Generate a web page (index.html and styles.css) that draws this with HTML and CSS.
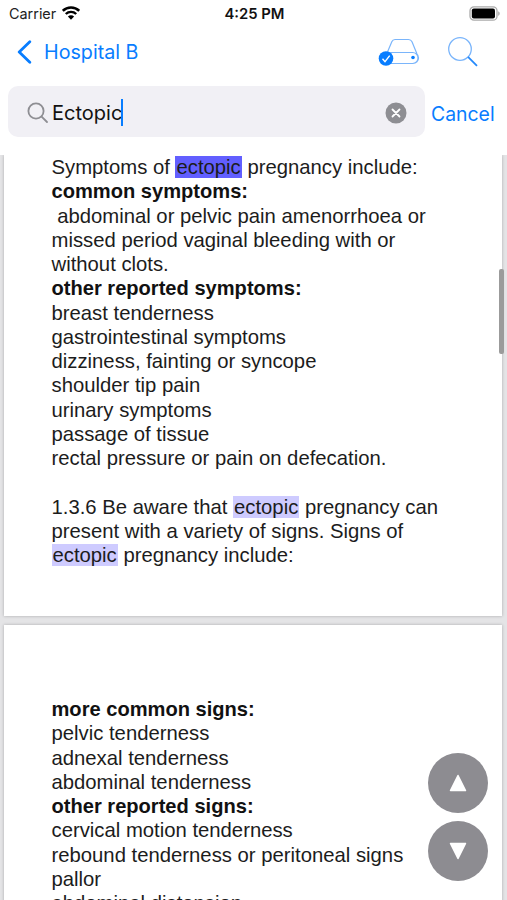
FILE: index.html
```html
<!DOCTYPE html>
<html lang="en">
<head>
    <meta charset="UTF-8">
    <meta name="viewport" content="width=device-width, initial-scale=1.0">
    <title>Hospital B</title>
    <link rel="stylesheet" href="styles.css">
</head>
<body>
    <div class="screen">
        <header class="header">
            <div class="status-bar">
                <div class="carrier">
                    <span>Carrier</span>
                    <svg class="wifi" width="18" height="14" viewBox="0 0 18 14">
                        <path d="M.8 4.800a11.600 11.600 0 0 1 16.400 0" fill="none" stroke="#000" stroke-width="2.500"/>
                        <path d="M3.800 8a7.400 7.400 0 0 1 10.400 0" fill="none" stroke="#000" stroke-width="2.400"/>
                        <path d="M9 13.800 5.900 10.600a4.400 4.400 0 0 1 6.200 0z"/>
                    </svg>
                </div>
                <span class="time">4:25 PM</span>
                <svg class="battery" width="31" height="15" viewBox="0 0 31 15">
                    <rect x="1" y=".8" width="27" height="13.400" rx="4" fill="#fff" stroke="#aaa" stroke-width="1.300"/>
                    <rect x="2.800" y="2.600" width="23.200" height="9.800" rx="2"/>
                    <path d="M29.200 5.200c2 .8 2 3.800 0 4.600z" fill="#aaa"/>
                </svg>
            </div>
            <nav class="nav-bar">
                <a class="back" href="#">
                    <svg width="15" height="24" viewBox="0 0 15 24">
                        <path d="M12.800 1.800 2.200 12l10.600 10.200" fill="none" stroke="#087dff" stroke-width="2.800" stroke-linecap="round" stroke-linejoin="round"/>
                    </svg>
                    <span>Hospital B</span>
                </a>
                <div class="nav-icons">
                    <svg width="42" height="30" viewBox="0 0 42 30" fill="none" stroke="#7ab5fb" stroke-width="1.200">
                        <path d="M9.500 15 13.800 4.700Q14.700 2.500 17 2.500h13.500q2.500 0 3.500 2.200L39 17M9 15.500h25.500a5.500 5.500 0 0 1 0 11H9M38.500 16.500q2 1.800 2 4.500a5.500 5.500 0 0 1-5.500 5.500"/>
                        <circle cx="35" cy="20.500" r="1.800" fill="#087dff" stroke="none"/>
                        <circle cx="8" cy="21.500" r="7.300" fill="#087dff" stroke="none"/>
                        <path d="m4.500 21.800 2.500 2.800 4.700-6" stroke="#fff" stroke-width="1.400"/>
                    </svg>
                    <svg width="32" height="32" viewBox="0 0 32 32" fill="none">
                        <circle cx="13" cy="13" r="11.300" stroke="#7ab5fb" stroke-width="1.300"/>
                        <path d="m21 20.800 9 9" stroke="#2589fb" stroke-width="1.800"/>
                    </svg>
                </div>
            </nav>
            <div class="search-row">
                <div class="search-field">
                    <svg class="search-icon" width="22" height="22" viewBox="0 0 22 22" fill="none" stroke="#8e8e93" stroke-width="1.800" stroke-linecap="round">
                        <circle cx="9" cy="9" r="7.600"/>
                        <path d="m14.600 14.600 5.400 5.400"/>
                    </svg>
                    <span class="query">Ectopic</span>
                    <span class="caret"></span>
                    <svg class="clear" width="22" height="22" viewBox="0 0 22 22">
                        <circle cx="11" cy="11" r="10.500" fill="#8e8e93"/>
                        <path d="m7.500 7.500 7 7m0-7-7 7" stroke="#fff" stroke-width="1.800" stroke-linecap="round"/>
                    </svg>
                </div>
                <a class="cancel" href="#">Cancel</a>
            </div>
        </header>

        <main class="document">
            <section class="page page-first">
                <p>Symptoms of <mark class="current">ectopic</mark> pregnancy include:</p>
                <p class="bold">common symptoms:</p>
                <p>&nbsp;abdominal or pelvic pain amenorrhoea or</p>
                <p>missed period vaginal bleeding with or</p>
                <p>without clots.</p>
                <p class="bold">other reported symptoms:</p>
                <p>breast tenderness</p>
                <p>gastrointestinal symptoms</p>
                <p>dizziness, fainting or syncope</p>
                <p>shoulder tip pain</p>
                <p>urinary symptoms</p>
                <p>passage of tissue</p>
                <p>rectal pressure or pain on defecation.</p>
                <p class="gap">1.3.6 Be aware that <mark>ectopic</mark> pregnancy can</p>
                <p>present with a variety of signs. Signs of</p>
                <p><mark>ectopic</mark> pregnancy include:</p>
            </section>
            <section class="page page-second">
                <p class="bold">more common signs:</p>
                <p>pelvic tenderness</p>
                <p>adnexal tenderness</p>
                <p>abdominal tenderness</p>
                <p class="bold">other reported signs:</p>
                <p>cervical motion tenderness</p>
                <p>rebound tenderness or peritoneal signs</p>
                <p>pallor</p>
                <p>abdominal distension</p>
            </section>
        </main>

        <div class="scroll-thumb"></div>
        <div class="match-buttons">
            <button type="button" aria-label="Previous">
                <svg width="18" height="18" viewBox="0 0 18 18"><path d="M9 1.500 16.500 16.500h-15z" fill="#fff" stroke="#fff" stroke-width="1.500" stroke-linejoin="round"/></svg>
            </button>
            <button type="button" aria-label="Next">
                <svg width="18" height="18" viewBox="0 0 18 18"><path d="M9 16.500 16.500 1.500h-15z" fill="#fff" stroke="#fff" stroke-width="1.500" stroke-linejoin="round"/></svg>
            </button>
        </div>
    </div>
</body>
</html>
```
FILE: styles.css
```css
body {
    margin: 0;
    font-family: Inter, sans-serif;
    background-color: #fff;
}

a {
    color: #087dff;
    text-decoration: none;
}

svg {
    display: block;
    flex-shrink: 0;
}

.screen {
    position: relative;
    width: 507px;
    height: 900px;
    overflow: hidden;
    display: flex;
    flex-direction: column;
}

.header {
    height: 155px;
    flex-shrink: 0;
    background-color: #fff;
}

.status-bar {
    height: 27px;
    display: grid;
    grid-template-columns: 1fr auto 1fr;
    align-items: center;
    padding: 0 7px 0 9px;
    font-size: 14.8px;
    color: #222;
}

.carrier {
    display: flex;
    align-items: center;
    gap: 6px;
    font-size: 14.4px;
}

.wifi {
    margin-bottom: 2px;
}

.time {
    font-weight: 600;
    color: #111;
}

.battery {
    justify-self: end;
}

.nav-bar {
    height: 50px;
    display: flex;
    align-items: center;
    justify-content: space-between;
    padding: 0 28px 0 17px;
}

.back {
    display: flex;
    align-items: center;
    gap: 12px;
    font-size: 19.7px;
}

.nav-icons {
    display: flex;
    align-items: center;
    gap: 27px;
}

.search-row {
    display: flex;
    align-items: center;
    gap: 6px;
    margin-top: 9px;
    padding-left: 8px;
}

.search-field {
    width: 417px;
    height: 51px;
    box-sizing: border-box;
    display: flex;
    align-items: center;
    padding: 3px 18px 0 19px;
    border-radius: 10px;
    background-color: #f1f0f5;
}

.query {
    margin-left: 3px;
    font-size: 20px;
    color: #111;
}

.caret {
    width: 2px;
    height: 27px;
    margin-left: -1px;
    margin-bottom: 2px;
    background-color: #087dff;
}

.clear {
    margin-left: auto;
}

.cancel {
    padding-top: 4px;
    font-size: 19.4px;
}

.document {
    flex: 1;
    min-height: 0;
    overflow: hidden;
    padding: 0 5px 0 4px;
    background-color: #e4e4e6;
    font-family: "Liberation Sans", Arial, sans-serif;
    font-size: 20.3px;
    line-height: 24.27px;
    color: #1c1c1c;
}

.page {
    box-sizing: border-box;
    padding-left: 47.5px;
    background-color: #fff;
    box-shadow: 0 0 3px rgba(0, 0, 0, 0.25);
}

.page p {
    margin: 0;
    white-space: nowrap;
}

.page .bold {
    font-weight: bold;
    font-size: 20.1px;
    color: #111;
}

.page .gap {
    margin-top: 24.27px;
}

.page-first {
    height: 461px;
}

.page-second {
    height: 700px;
    margin-top: 9px;
    padding-top: 72px;
}

mark {
    padding: 0 1px;
    background-color: #cecbff;
    color: inherit;
}

mark.current {
    background-color: #625fff;
}

.scroll-thumb {
    position: absolute;
    top: 269px;
    right: 3px;
    width: 5px;
    height: 85px;
    border-radius: 2px;
    background-color: #9b9b9b;
}

.match-buttons {
    position: absolute;
    right: 19px;
    bottom: 19px;
    display: flex;
    flex-direction: column;
    gap: 8px;
}

.match-buttons button {
    width: 60px;
    height: 60px;
    display: flex;
    align-items: center;
    justify-content: center;
    padding: 0;
    border: none;
    border-radius: 50%;
    background-color: #8d8c91;
    cursor: pointer;
}
```
